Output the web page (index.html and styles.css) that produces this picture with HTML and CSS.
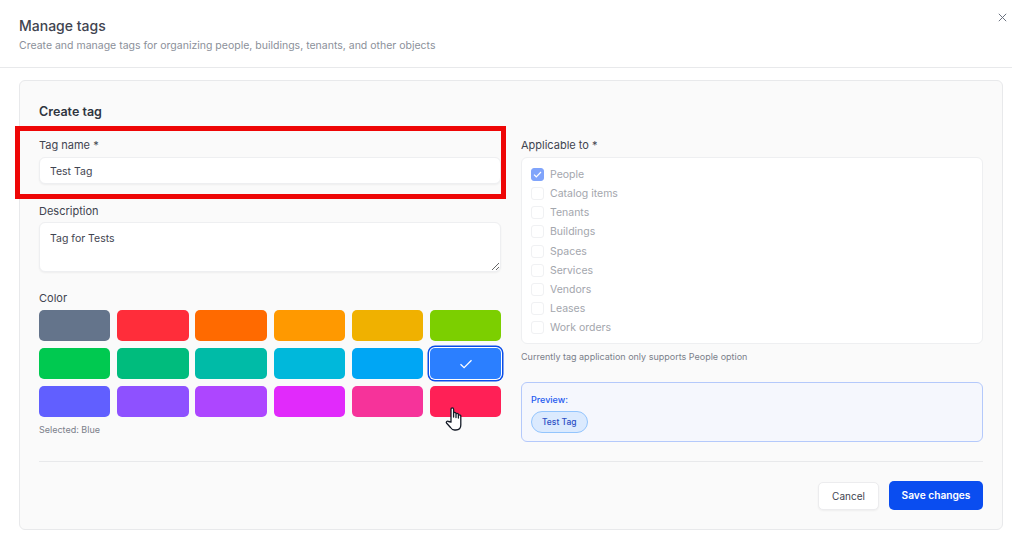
FILE: index.html
```html
<!DOCTYPE html>
<html lang="en">
<head>
  <meta charset="UTF-8" />
  <meta name="viewport" content="width=device-width, initial-scale=1.0"/>
  <title>Manage tags</title>
  <link rel="stylesheet" href="styles.css">
</head>
<body>
  <div class="modal">
    <div class="modal-header">
      <h1 class="modal-title">Manage tags</h1>
      <p class="modal-subtitle">Create and manage tags for organizing people, buildings, tenants, and other objects</p>
      <button class="close-btn" aria-label="Close">
        <svg width="9" height="9" viewBox="0 0 9 9"><path d="M.8.8l7.4 7.4M8.2.8L.8 8.2" stroke="#6b7280" stroke-width="1" fill="none"/></svg>
      </button>
    </div>

    <div class="card">
      <h2 class="card-title">Create tag</h2>
      <div class="columns">
        <div class="column">
          <label class="field-label">Tag name *</label>
          <input class="text-input" type="text" value="Test Tag" />

          <label class="field-label description-label">Description</label>
          <textarea class="text-area">Tag for Tests</textarea>

          <label class="field-label color-label">Color</label>
          <div class="swatches">
            <div class="swatch" style="background:#64748b"></div>
            <div class="swatch" style="background:#ff2d3a"></div>
            <div class="swatch" style="background:#ff6a00"></div>
            <div class="swatch" style="background:#ff9900"></div>
            <div class="swatch" style="background:#f0b100"></div>
            <div class="swatch" style="background:#7ccf00"></div>
            <div class="swatch" style="background:#00c950"></div>
            <div class="swatch" style="background:#00bc7d"></div>
            <div class="swatch" style="background:#00bba7"></div>
            <div class="swatch" style="background:#00b8db"></div>
            <div class="swatch" style="background:#00a6f4"></div>
            <div class="swatch swatch-selected" style="background:#2b7fff">
              <svg width="14" height="10" viewBox="0 0 14 10"><path d="M1.5 5.2l3.6 3.4 7.4-7.4" stroke="#fff" stroke-width="1.3" fill="none"/></svg>
            </div>
            <div class="swatch" style="background:#615fff"></div>
            <div class="swatch" style="background:#8e51ff"></div>
            <div class="swatch" style="background:#ad46ff"></div>
            <div class="swatch" style="background:#e12afb"></div>
            <div class="swatch" style="background:#f6339a"></div>
            <div class="swatch" style="background:#ff2056"></div>
          </div>
          <p class="hint selected-hint">Selected: Blue</p>
        </div>

        <div class="column">
          <label class="field-label">Applicable to *</label>
          <div class="checklist">
            <div class="check-row">
              <span class="checkbox checkbox-on">
                <svg width="9" height="7" viewBox="0 0 9 7"><path d="M1 3.6l2.3 2.2L8 1" stroke="#fff" stroke-width="1.2" fill="none"/></svg>
              </span>
              People
            </div>
            <div class="check-row"><span class="checkbox"></span>Catalog items</div>
            <div class="check-row"><span class="checkbox"></span>Tenants</div>
            <div class="check-row"><span class="checkbox"></span>Buildings</div>
            <div class="check-row"><span class="checkbox"></span>Spaces</div>
            <div class="check-row"><span class="checkbox"></span>Services</div>
            <div class="check-row"><span class="checkbox"></span>Vendors</div>
            <div class="check-row"><span class="checkbox"></span>Leases</div>
            <div class="check-row"><span class="checkbox"></span>Work orders</div>
          </div>
          <p class="hint support-hint">Currently tag application only supports People option</p>

          <div class="preview">
            <div class="preview-label">Preview:</div>
            <span class="tag-chip">Test Tag</span>
          </div>
        </div>
      </div>

      <div class="card-footer">
        <button class="btn btn-cancel">Cancel</button>
        <button class="btn btn-save">Save changes</button>
      </div>
    </div>
  </div>

  <div class="highlight-box"></div>
  <svg class="hand-cursor" width="20" height="27" viewBox="0 0 20 27">
    <path d="M6 16V3.2a1.3 1.3 0 0 1 2.6 0V11V7.6a1.2 1.2 0 0 1 2.4 0V11.5V8.6a1.2 1.2 0 0 1 2.4 0V12V10a1.2 1.2 0 0 1 2.4 0v9c0 3-2 5-5 5H9.5c-2 0-3-1-4-2.5L1.5 17c-.8-1.2.8-2.6 2-1.5z" fill="#fff" stroke="#141a26" stroke-width="1.3" stroke-linejoin="round"/>
  </svg>
</body>
</html>
```

FILE: styles.css
```css
* {
  box-sizing: border-box;
}
html, body {
  height: 533px;
}
body {
  margin: 0;
  position: relative;
  overflow: hidden;
  background: #fff;
  font-family: Inter, "Liberation Sans", sans-serif;
  color: #374151;
}
.modal-header {
  position: relative;
  height: 68px;
  padding: 17px 19px 0;
  border-bottom: 1px solid #e8e9eb;
}
.modal-title {
  margin: 0 0 5px;
  font-size: 14px;
  line-height: 17px;
  font-weight: 500;
  color: #3f4450;
}
.modal-subtitle {
  margin: 0;
  font-size: 10.5px;
  line-height: 14px;
  color: #8b909a;
}
.close-btn {
  position: absolute;
  top: 13px;
  right: 5px;
  padding: 0;
  border: none;
  background: none;
  line-height: 0;
}
.card {
  margin: 12px 9px 0 19px;
  height: 450px;
  padding: 21px 19px 0;
  background: #fafafa;
  border: 1px solid #e8e9eb;
  border-radius: 6px;
}
.card-title {
  margin: 0 0 15px;
  font-size: 12.5px;
  line-height: 20px;
  font-weight: 600;
  color: #2f3540;
}
.columns {
  display: grid;
  grid-template-columns: 462.4px 462px;
  column-gap: 19.6px;
  height: 325px;
  border-bottom: 1px solid #e8e9eb;
}
.column {
  display: flex;
  flex-direction: column;
  align-items: stretch;
}
.field-label {
  font-size: 11px;
  line-height: 16px;
  margin-bottom: 4px;
  color: #3f4450;
}
.description-label {
  margin-top: 19px;
  margin-bottom: 3px;
}
.color-label {
  margin-top: 18px;
  margin-bottom: 4px;
}
.text-input, .text-area {
  width: 462px;
  padding: 0 10px;
  background: #fff;
  border: 1px solid #eeeff1;
  border-radius: 6px;
  box-shadow: 0 1px 2px rgba(0,0,0,0.05);
  font-family: inherit;
  font-size: 10.5px;
  color: #3f4450;
  outline: none;
}
.text-input {
  height: 27px;
  padding-top: 2px;
}
.text-area {
  display: block;
  height: 50px;
  padding-top: 9px;
}
.swatches {
  display: grid;
  grid-template-columns: repeat(6, 1fr);
  grid-auto-rows: 31px;
  gap: 7px 6.8px;
}
.swatch {
  border-radius: 5px;
  display: flex;
  align-items: center;
  justify-content: center;
}
.swatch-selected {
  box-shadow: 0 0 0 1px #fff, 0 0 0 2.5px #0a4de8;
}
.hint {
  margin: 0;
  font-size: 9px;
  line-height: 12px;
  color: #7b808a;
}
.selected-hint {
  margin-top: 7px;
}
.checklist {
  height: 187px;
  padding: 7.1px 9px;
  background: #fff;
  border: 1px solid #eeeff1;
  border-radius: 6px;
}
.check-row {
  display: flex;
  align-items: center;
  gap: 6px;
  height: 19.1px;
  font-size: 10.5px;
  color: #a3a6ad;
}
.checkbox {
  width: 13px;
  height: 13px;
  border: 1px solid #f0f1f3;
  border-radius: 3px;
  background: #fff;
  display: flex;
  align-items: center;
  justify-content: center;
}
.checkbox-on {
  background: #80a4fb;
  border-color: #80a4fb;
}
.support-hint {
  margin-top: 7px;
}
.preview {
  margin-top: 19px;
  height: 60px;
  padding: 11px 9px 0;
  background: #f5f7fd;
  border: 1px solid #b4c9fb;
  border-radius: 6px;
}
.preview-label {
  font-size: 9px;
  line-height: 12px;
  font-weight: 500;
  color: #1f5bf0;
  margin-bottom: 3px;
}
.tag-chip {
  display: inline-block;
  height: 22px;
  padding: 0 10px;
  line-height: 20px;
  font-size: 8.5px;
  font-weight: 500;
  color: #2b4fc4;
  background: #dbeafe;
  border: 1px solid #93c5fd;
  border-radius: 11px;
}
.card-footer {
  display: flex;
  justify-content: flex-end;
  align-items: center;
  gap: 10px;
  padding-top: 19px;
}
.btn {
  font-family: inherit;
  border-radius: 5px;
  cursor: pointer;
}
.btn-cancel {
  width: 61px;
  height: 28px;
  font-size: 10px;
  background: #fff;
  color: #3f4450;
  border: 1px solid #ececee;
  box-shadow: 0 1px 2px rgba(0,0,0,0.05);
}
.btn-save {
  width: 94px;
  height: 29px;
  padding-bottom: 3px;
  font-size: 10.2px;
  background: #0a4df0;
  color: #fff;
  border: none;
  font-weight: 600;
}
.highlight-box {
  position: absolute;
  left: 15px;
  top: 126px;
  width: 491px;
  height: 73px;
  border: 5px solid #ee0606;
}
.hand-cursor {
  position: absolute;
  left: 445px;
  top: 406px;
}
```
